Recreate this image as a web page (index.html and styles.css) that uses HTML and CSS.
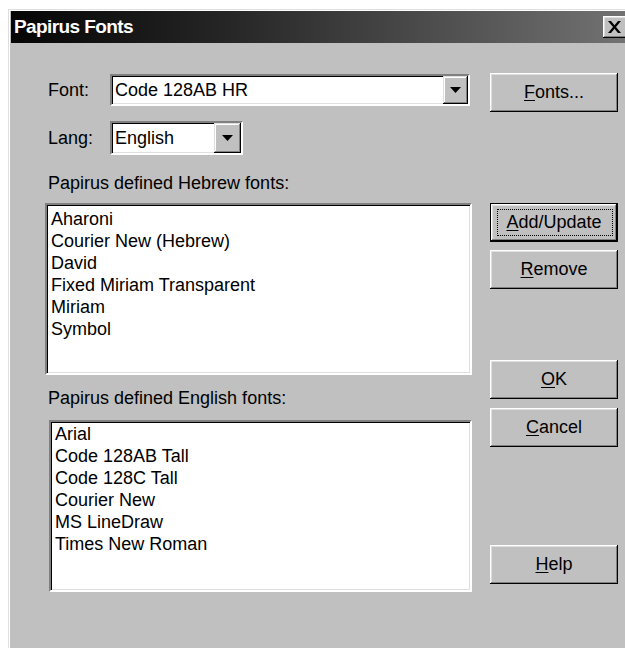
FILE: index.html
```html
<!DOCTYPE html>
<html lang="en">
<head>
<meta charset="utf-8">
<title>Papirus Fonts</title>
<link rel="stylesheet" href="styles.css">
</head>
<body>
<div class="window">
  <div class="titlebar">
    <span class="title">Papirus Fonts</span>
    <button class="close" type="button" aria-label="Close">
      <svg width="13" height="12" viewBox="0 0 13 12"><path d="M0 0h3l3.5 4.2L10 0h3L8 6l5 6h-3L6.5 7.8 3 12H0l5-6z" fill="#000"/></svg>
    </button>
  </div>
  <div class="content">
    <div class="left">
      <div class="field-row">
        <span class="label">Font:</span>
        <div class="combo combo-font">
          <span class="combo-value">Code 128AB HR</span>
          <span class="combo-arrow"><svg width="11" height="6" viewBox="0 0 11 6"><path d="M0 0h11L5.5 6z" fill="#000"/></svg></span>
        </div>
      </div>
      <div class="field-row field-row-lang">
        <span class="label">Lang:</span>
        <div class="combo combo-lang">
          <span class="combo-value">English</span>
          <span class="combo-arrow combo-arrow-wide"><svg width="11" height="6" viewBox="0 0 11 6"><path d="M0 0h11L5.5 6z" fill="#000"/></svg></span>
        </div>
      </div>
      <div class="caption caption-hebrew">Papirus defined Hebrew fonts:</div>
      <ul class="listbox listbox-hebrew">
        <li>Aharoni</li>
        <li>Courier New (Hebrew)</li>
        <li>David</li>
        <li>Fixed Miriam Transparent</li>
        <li>Miriam</li>
        <li>Symbol</li>
      </ul>
      <div class="caption caption-english">Papirus defined English fonts:</div>
      <ul class="listbox listbox-english">
        <li>Arial</li>
        <li>Code 128AB Tall</li>
        <li>Code 128C Tall</li>
        <li>Courier New</li>
        <li>MS LineDraw</li>
        <li>Times New Roman</li>
      </ul>
    </div>
    <div class="right">
      <button class="btn" type="button"><span class="btn-label"><u>F</u>onts...</span></button>
      <button class="btn btn-default btn-add" type="button"><span class="btn-label"><u>A</u>dd/Update</span></button>
      <button class="btn btn-remove" type="button"><span class="btn-label"><u>R</u>emove</span></button>
      <button class="btn btn-ok" type="button"><span class="btn-label"><u>O</u>K</span></button>
      <button class="btn btn-cancel" type="button"><span class="btn-label"><u>C</u>ancel</span></button>
      <button class="btn btn-help" type="button"><span class="btn-label"><u>H</u>elp</span></button>
    </div>
  </div>
</div>
</body>
</html>
```
FILE: styles.css
```css
html, body {
  margin: 0;
  height: 648px;
  overflow: hidden;
  background: #fff;
}

body {
  font-family: "Liberation Sans", Arial, sans-serif;
  font-size: 18px;
  color: #000;
}

/* dialog frame */
.window {
  box-sizing: border-box;
  width: 630px;
  height: 639px;
  margin: 9px 0 0 8px;
  padding: 2px 3px 0;
  background: #c0c0c0;
  box-shadow: inset 1px 1px #dfdfdf, inset 2px 2px #fff;
}

.titlebar {
  display: flex;
  align-items: center;
  justify-content: space-between;
  height: 32px;
  padding-left: 3px;
  background: linear-gradient(to right, #050505 0%, #262626 35%, #747474 100%);
}

.title {
  color: #fff;
  font-weight: bold;
  font-size: 19px;
  letter-spacing: -0.6px;
}

.close {
  display: flex;
  align-items: center;
  justify-content: flex-start;
  width: 26px;
  height: 22px;
  margin-right: 6px;
  padding: 0 0 0 5px;
  border: 0;
  background: #c0c0c0;
  box-shadow: inset -1px -1px #000, inset 1px 1px #fff, inset -2px -2px #808080, inset 2px 2px #dfdfdf;
}

.content {
  display: flex;
  gap: 18px;
  padding-left: 34px;
}

/* left column: pickers and lists */
.left {
  display: flex;
  flex-direction: column;
  width: 427px;
  padding-top: 31px;
}

.field-row {
  display: flex;
  align-items: center;
}

.field-row-lang {
  margin-top: 15px;
}

.label {
  box-sizing: border-box;
  width: 65px;
  padding-left: 3px;
}

.combo {
  box-sizing: border-box;
  display: flex;
  align-items: stretch;
  background: #fff;
  border: 2px solid;
  border-color: #808080 #fff #fff #808080;
  box-shadow: inset 1px 1px #000, inset -1px -1px #dfdfdf;
}

.combo-font {
  width: 360px;
  height: 32px;
}

.combo-lang {
  width: 133px;
  height: 34px;
}

.combo-value {
  flex: 1;
  display: flex;
  align-items: center;
  padding-left: 3px;
}

.combo-arrow {
  display: flex;
  align-items: center;
  justify-content: center;
  width: 25px;
  background: #c0c0c0;
  box-shadow: inset -1px -1px #000, inset 1px 1px #dfdfdf, inset -2px -2px #808080, inset 2px 2px #fff;
}

.combo-arrow-wide {
  width: 27px;
}

.caption {
  line-height: 22px;
  padding-left: 3px;
}

.caption-hebrew {
  margin-top: 17px;
}

.caption-english {
  margin-top: 12px;
}

.listbox {
  box-sizing: border-box;
  height: 172px;
  margin: 0;
  padding: 3px 4px;
  list-style: none;
  line-height: 22px;
  background: #fff;
  border: 2px solid;
  border-color: #808080 #fff #fff #808080;
  box-shadow: inset 1px 1px #000, inset -1px -1px #dfdfdf;
}

.listbox-hebrew {
  margin-top: 9px;
}

.listbox-english {
  width: 423px;
  margin-top: 11px;
  margin-left: 4px;
  padding-top: 1px;
}

/* right column: command buttons */
.right {
  display: flex;
  flex-direction: column;
  width: 128px;
  padding-top: 30px;
}

.btn {
  position: relative;
  box-sizing: border-box;
  display: flex;
  align-items: center;
  justify-content: center;
  width: 128px;
  height: 39px;
  padding: 0;
  border: 0;
  background: #c0c0c0;
  font: inherit;
  color: #000;
  box-shadow: inset -1px -1px #000, inset 1px 1px #fff, inset -2px -2px #808080, inset 2px 2px #dfdfdf;
}

.btn u {
  text-decoration-thickness: 1px;
  text-underline-offset: 2px;
}

.btn-default {
  border: 1px solid #000;
}

/* keyboard focus ring on the default button */
.btn-default::after {
  content: "";
  position: absolute;
  inset: 5px 4px 5px 6px;
  border: 1px dotted #000;
}

.btn-add {
  margin-top: 91px;
}

.btn-remove {
  margin-top: 8px;
}

.btn-ok {
  margin-top: 71px;
}

.btn-cancel {
  margin-top: 9px;
}

.btn-help {
  margin-top: 98px;
}
```
